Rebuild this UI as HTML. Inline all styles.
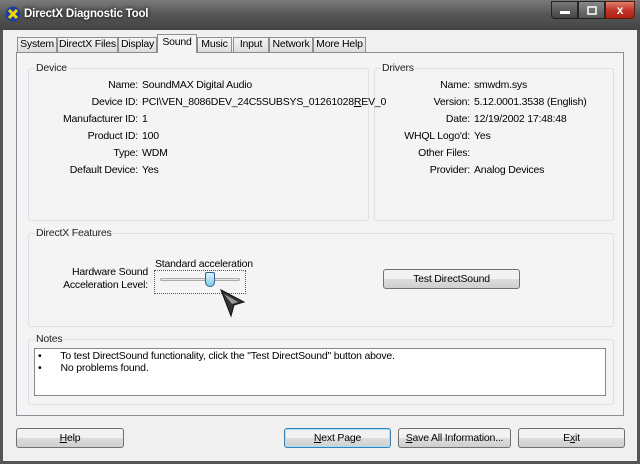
<!DOCTYPE html>
<html><head><style>
*{margin:0;padding:0;box-sizing:border-box}
body{width:640px;height:464px;overflow:hidden;background:#fff;font-family:"Liberation Sans",sans-serif;font-size:10.5px;color:#000;position:relative;letter-spacing:-0.2px}
.abs{position:absolute}
#win{left:0;top:0;width:640px;height:464px;background:#f0f0f0;border:1px solid #333;border-width:0 3px 3px 3px;border-color:#555}
#title{left:0;top:0;width:640px;height:30px;background:linear-gradient(#7a7a7a,#555 50%,#444);}
#title span{position:absolute;left:24px;top:8px;color:#fff;font-weight:bold;font-size:11.5px;text-shadow:0 0 4px #000}
.tab{position:absolute;top:37px;height:15px;border:1px solid #8e8f8f;border-bottom:none;background:linear-gradient(#f4f4f4,#dcdcdc);text-align:center;line-height:13px;white-space:nowrap;overflow:hidden}
#panel{left:16px;top:52px;width:608px;height:364px;border:1px solid #898c95;background:#f4f4f4}
.grp{position:absolute;border:1px solid #dcdfe3;border-radius:3px}
.gl{position:absolute;top:-7px;left:6px;background:#f4f4f4;padding:0 1px;color:#222}
.r{position:absolute;text-align:right;white-space:nowrap}
.v{position:absolute;white-space:nowrap}
.btn{position:absolute;height:20px;border:1px solid #707070;border-radius:3px;background:linear-gradient(#f2f2f2 50%,#dddddd 50%,#cfcfcf);text-align:center;line-height:18px;white-space:nowrap}
</style></head><body>
<div id="win" class="abs"></div>
<div id="title" class="abs">
<svg class="abs" style="left:5px;top:6px" width="16" height="16"><circle cx="8" cy="8" r="7.5" fill="#1a3f9c"/><path d="M4 4L12 12M12 4L4 12" stroke="#f7d400" stroke-width="3"/></svg>
<span>DirectX Diagnostic Tool</span>
<div class="abs" style="left:551px;top:1px;width:27px;height:18px;background:linear-gradient(#777,#444);border:1px solid #222;border-radius:0 0 0 4px"><div class="abs" style="left:8px;top:9px;width:10px;height:3px;background:#fff"></div></div>
<div class="abs" style="left:578px;top:1px;width:27px;height:18px;background:linear-gradient(#888,#555);border:1px solid #222"><div class="abs" style="left:8px;top:4px;width:10px;height:9px;border:2px solid #ddd"></div></div>
<div class="abs" style="left:605px;top:1px;width:30px;height:18px;background:linear-gradient(#e08070,#c2352a 50%,#b02010);border:1px solid #5a1a10;border-radius:0 0 4px 0;color:#fff;font-weight:bold;text-align:center;line-height:17px;font-size:12px">x</div>
</div>
<div class="tab" style="left:17px;width:40px">System</div>
<div class="tab" style="left:57px;width:61px">DirectX Files</div>
<div class="tab" style="left:118px;width:39px">Display</div>
<div class="tab" style="left:157px;top:34px;height:19px;width:40px;background:#f4f4f4;z-index:2;line-height:15px">Sound</div>
<div class="tab" style="left:197px;width:35px">Music</div>
<div class="tab" style="left:233px;width:36px">Input</div>
<div class="tab" style="left:269px;width:44px">Network</div>
<div class="tab" style="left:313px;width:53px">More Help</div>
<div id="panel" class="abs">
 <div class="grp" style="left:11px;top:15px;width:341px;height:153px"><div class="gl">Device</div></div>
 <div class="grp" style="left:357px;top:15px;width:240px;height:153px"><div class="gl">Drivers</div></div>
 <div class="grp" style="left:11px;top:180px;width:586px;height:94px"><div class="gl">DirectX Features</div></div>
 <div class="grp" style="left:11px;top:286px;width:586px;height:66px"><div class="gl">Notes</div></div>
</div>
<div class="r" style="left:30px;width:108px;top:77px;line-height:17px">Name:<br>Device ID:<br>Manufacturer ID:<br>Product ID:<br>Type:<br>Default Device:</div>
<div class="v" style="left:142px;top:77px;line-height:17px">SoundMAX Digital Audio<br>PCI\VEN_8086DEV_24C5SUBSYS_01261028<u>R</u>EV_0<br>1<br>100<br>WDM<br>Yes</div>
<div class="r" style="left:380px;width:90px;top:77px;line-height:17px">Name:<br>Version:<br>Date:<br>WHQL Logo'd:<br>Other Files:<br>Provider:</div>
<div class="v" style="left:474px;top:77px;line-height:17px">smwdm.sys<br>5.12.0001.3538 (English)<br>12/19/2002 17:48:48<br>Yes<br><br>Analog Devices</div>
<div class="r" style="left:50px;width:98px;top:266px;line-height:13px">Hardware Sound<br>Acceleration Level:</div>
<div class="v" style="left:155px;top:258px">Standard acceleration</div>
<div class="abs" style="left:154px;top:270px;width:92px;height:24px;border:1px dotted #555"></div>
<div class="abs" style="left:160px;top:278px;width:80px;height:3px;border:1px solid #aaa;border-radius:2px;background:#e6e6e6"></div>
<div class="abs" style="left:205px;top:272px;width:10px;height:15px;background:linear-gradient(#dff3ff,#7fc9ec);border:1px solid #2c628b;border-radius:2px 2px 5px 5px"></div>
<svg class="abs" style="left:218px;top:288px" width="32" height="32"><path d="M3 2L26 14L16 17L13 28Z" fill="#333" stroke="#111"/><path d="M6 6L20 14L14 16Z" fill="#999"/></svg>
<div class="btn" style="left:383px;top:269px;width:137px">Test DirectSound</div>
<div class="abs" style="left:34px;top:348px;width:572px;height:48px;background:#fff;border:1px solid #828790;line-height:12px;padding:1px 0 0 3px;white-space:nowrap">•&nbsp;&nbsp;&nbsp;&nbsp;&nbsp;&nbsp; To test DirectSound functionality, click the "Test DirectSound" button above.<br>•&nbsp;&nbsp;&nbsp;&nbsp;&nbsp;&nbsp; No problems found.</div>
<div class="btn" style="left:16px;top:428px;width:108px"><u>H</u>elp</div>
<div class="btn" style="left:284px;top:428px;width:107px;border-color:#3c7fb1;box-shadow:inset 0 0 0 1px #9fe0ff"><u>N</u>ext Page</div>
<div class="btn" style="left:398px;top:428px;width:113px"><u>S</u>ave All Information...</div>
<div class="btn" style="left:518px;top:428px;width:107px">E<u>x</u>it</div>
</body></html>
